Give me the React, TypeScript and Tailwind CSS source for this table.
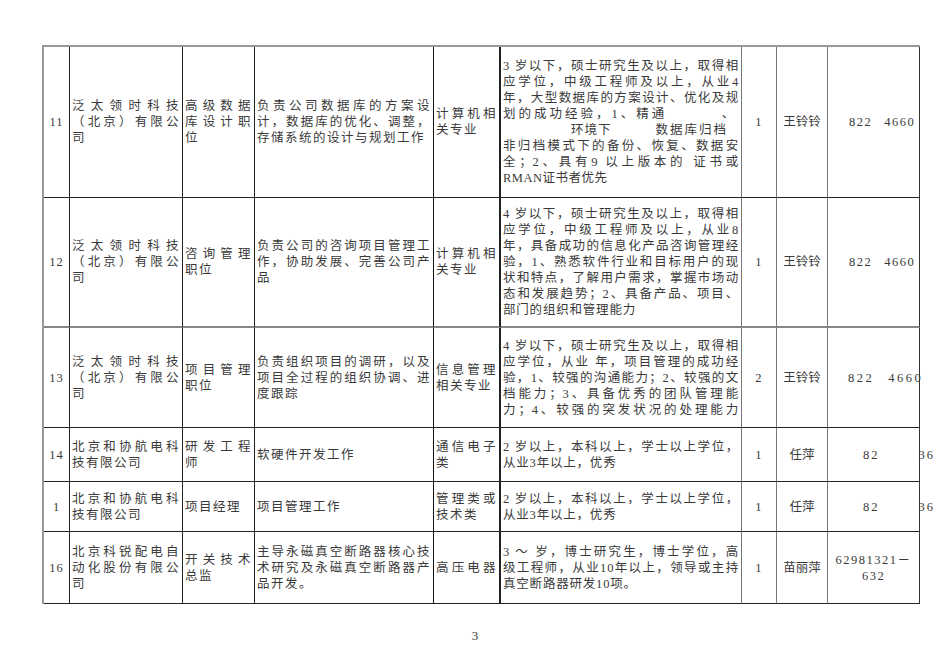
import type { ReactNode } from 'react';

type Row = {
  num: string;
  company: string[];
  position: string[];
  duty: string[];
  major: string[];
  majorFull?: boolean;
  req: ReactNode;
  count: string;
  name: string;
  phone: ReactNode;
};

const FANTAI = ['泛太领时科技', '（北京）有限公', '司'];
const HEXIE = ['北京和协航电科', '技有限公司'];

// column widths: 26 113 72 179 67 241 35 51 92
const COL_BORDER = [
  'border-r border-r-[#222]',
  'border-r border-r-[#222]',
  'border-r border-r-[#222]',
  'border-r border-r-[#111]',
  'border-r-2 border-r-[#222]',
  'border-r border-r-[#777]',
  'border-r border-r-[#777]',
  'border-r border-r-[#777]',
  'border-r border-r-[#333]',
];

const ROW_BORDER = [
  'border-b border-b-[#222]',
  'border-b-2 border-b-[#888]',
  'border-b border-b-[#222]',
  'border-b border-b-[#222]',
  'border-b border-b-[#222]',
  'border-b border-b-[#222]',
];

function Lines({ lines, full }: { lines: string[]; full?: boolean }) {
  return (
    <div>
      {lines.map((l, i) => (
        <div
          key={i}
          className={
            full || i < lines.length - 1
              ? 'text-justify [text-align-last:justify]'
              : 'text-left'
          }
        >
          {l}
        </div>
      ))}
    </div>
  );
}

function Phone({ a, b, gap, tr }: { a: string; b: string; gap: string; tr: string }) {
  return (
    <div className={`flex ${tr}`}>
      <span>{a}</span>
      <span className={gap}>{b}</span>
    </div>
  );
}

const req11 = (
  <div>
    <Lines
      lines={['3 岁以下，硕士研究生及以上，取得相', '应学位，中级工程师及以上，从业4', '年，大型数据库的方案设计、优化及规']}
      full
    />
    <div className="flex justify-between">
      <span className="tracking-[3px]">划的成功经验，1、精通</span>
      <span className="pr-[4px]">、</span>
    </div>
    <div className="flex pl-[68px]">
      <span className="tracking-[1px]">环境下</span>
      <span className="ml-[44px] tracking-[2px]">数据库归档</span>
    </div>
    <Lines lines={['非归档模式下的备份、恢复、数据安', '全；2、具有9 以上版本的 证书或']} full />
    <div className="tracking-[0.5px]">RMAN证书者优先</div>
  </div>
);

const ROWS: Row[] = [
  {
    num: '11',
    company: FANTAI,
    position: ['高级数据', '库设计职', '位'],
    duty: ['负责公司数据库的方案设', '计，数据库的优化、调整，', '存储系统的设计与规划工作'],
    major: ['计算机相', '关专业'],
    req: req11,
    count: '1',
    name: '王铃铃',
    phone: <Phone a="822" b="4660" gap="ml-[12px]" tr="pl-[19px] tracking-[1.5px]" />,
  },
  {
    num: '12',
    company: FANTAI,
    position: ['咨询管理', '职位'],
    duty: ['负责公司的咨询项目管理工', '作，协助发展、完善公司产', '品'],
    major: ['计算机相', '关专业'],
    req: (
      <Lines
        lines={[
          '4 岁以下，硕士研究生及以上，取得相',
          '应学位，中级工程师及以上，从业8',
          '年，具备成功的信息化产品咨询管理经',
          '验，1、熟悉软件行业和目标用户的现',
          '状和特点，了解用户需求，掌握市场动',
          '态和发展趋势；2、具备产品、项目、',
          '部门的组织和管理能力',
        ]}
      />
    ),
    count: '1',
    name: '王铃铃',
    phone: <Phone a="822" b="4660" gap="ml-[12px]" tr="pl-[19px] tracking-[1.5px]" />,
  },
  {
    num: '13',
    company: FANTAI,
    position: ['项目管理', '职位'],
    duty: ['负责组织项目的调研，以及', '项目全过程的组织协调、进', '度跟踪'],
    major: ['信息管理', '相关专业'],
    req: (
      <Lines
        lines={[
          '4 岁以下，硕士研究生及以上，取得相',
          '应学位，从业 年，项目管理的成功经',
          '验，1、较强的沟通能力；2、较强的文',
          '档能力；3、具备优秀的团队管理能',
          '力；4、较强的突发状况的处理能力',
        ]}
        full
      />
    ),
    count: '2',
    name: '王铃铃',
    phone: <Phone a="822" b="4660" gap="ml-[14px]" tr="pl-[18px] tracking-[2.5px]" />,
  },
  {
    num: '14',
    company: HEXIE,
    position: ['研发工程', '师'],
    duty: ['软硬件开发工作'],
    major: ['通信电子', '类'],
    req: <Lines lines={['2 岁以上，本科以上，学士以上学位，', '从业3年以上，优秀']} />,
    count: '1',
    name: '任萍',
    phone: <Phone a="82" b="36" gap="ml-[39px]" tr="pl-[33px] tracking-[2px]" />,
  },
  {
    num: '1',
    company: HEXIE,
    position: ['项目经理'],
    duty: ['项目管理工作'],
    major: ['管理类或', '技术类'],
    req: <Lines lines={['2 岁以上，本科以上，学士以上学位，', '从业3年以上，优秀']} />,
    count: '1',
    name: '任萍',
    phone: <Phone a="82" b="36" gap="ml-[39px]" tr="pl-[33px] tracking-[2px]" />,
  },
  {
    num: '16',
    company: ['北京科锐配电自', '动化股份有限公', '司'],
    position: ['开关技术', '总监'],
    duty: ['主导永磁真空断路器核心技', '术研究及永磁真空断路器产', '品开发。'],
    major: ['高压电器'],
    majorFull: true,
    req: (
      <Lines
        lines={['3 ～  岁，博士研究生，博士学位，高', '级工程师，从业10年以上，领导或主持', '真空断路器研发10项。']}
      />
    ),
    count: '1',
    name: '苗丽萍',
    phone: (
      <div className="text-center tracking-[1.5px]">
        <div>62981321－</div>
        <div>632</div>
      </div>
    ),
  },
];

function Cell({ col, row, className, children }: { col: number; row: number; className?: string; children: ReactNode }) {
  return (
    <div className={`flex flex-col justify-center px-[2px] ${COL_BORDER[col]} ${ROW_BORDER[row]} ${className ?? ''}`}>
      {children}
    </div>
  );
}

export default function App() {
  return (
    <div className="min-h-[672px] w-[950px] bg-white pt-[45px] font-['Liberation_Serif','Noto_Sans_CJK_SC',serif] text-[12.5px] leading-[16px] tracking-[1.5px] text-[#3a3a3a]">
      <div className="ml-[42px] grid w-[878px] grid-cols-[26px_113px_72px_179px_67px_241px_35px_51px_92px] grid-rows-[151px_130px_100px_54px_50px_72px] border-l-2 border-t-2 border-l-[#999] border-t-[#999]">
        {ROWS.map((r, i) => (
          <div key={i} className="contents">
            <Cell col={0} row={i} className="items-center tracking-[1px]">
              {r.num}
            </Cell>
            <Cell col={1} row={i}>
              <Lines lines={r.company} />
            </Cell>
            <Cell col={2} row={i}>
              <Lines lines={r.position} />
            </Cell>
            <Cell col={3} row={i}>
              <Lines lines={r.duty} />
            </Cell>
            <Cell col={4} row={i}>
              <Lines lines={r.major} full={r.majorFull} />
            </Cell>
            <Cell col={5} row={i} className="tracking-[0.8px]">
              {r.req}
            </Cell>
            <Cell col={6} row={i} className="items-center">
              {r.count}
            </Cell>
            <Cell col={7} row={i} className="items-center tracking-[0px]">
              {r.name}
            </Cell>
            <Cell col={8} row={i} className="px-0">
              {r.phone}
            </Cell>
          </div>
        ))}
      </div>
      <p className="mt-[24px] text-center text-[13px] tracking-normal">3</p>
    </div>
  );
}
